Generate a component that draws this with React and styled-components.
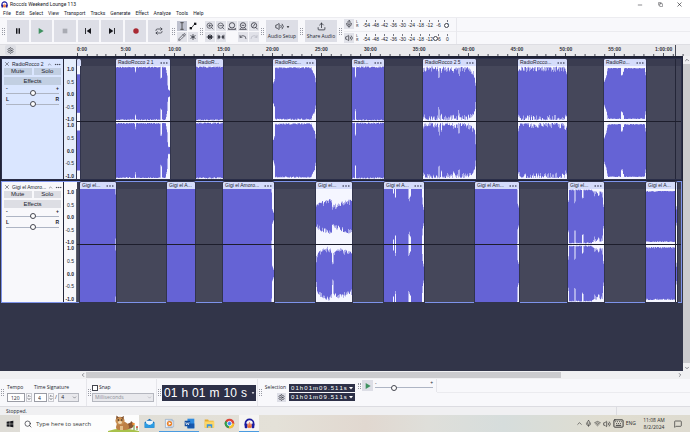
import React from "react";
import styled, { createGlobalStyle, css } from "styled-components";
import {
  Asterisk, ChevronDown, ChevronLeft, ChevronRight, ChevronUp, Ellipsis, Keyboard, MessageSquare, Mic, Minus,
  Pencil, Redo, Repeat, Search, Settings, Undo, Upload, Volume2, X, Copy, ZoomIn, ZoomOut, Wifi,
} from "lucide-react";

const Global = createGlobalStyle`
  * { box-sizing: border-box; }
  html, body { margin: 0; padding: 0; background: #f8f8fb; }
  body { font-family: "Open Sans", "Noto Sans", sans-serif; font-size: 5px; line-height: 7px; color: #22242e; }
  button, input, select { font: inherit; color: inherit; margin: 0; padding: 0; border: 0; border-radius: 0; }
  button { display: flex; align-items: center; justify-content: center; background: none; }
  svg { display: block; flex: none; }
`;

const Page = styled.div`
  display: flex;
  flex-direction: column;
  min-height: 100vh;
`;

/* ---------- title and menu ---------- */
const TitleBar = styled.header`
  display: flex;
  align-items: center;
  height: 9px;
  padding: 0 4px 0 1px;
  gap: 2px;
  background: #fff;
  color: #16171c;
`;
const Title = styled.h1`
  flex: 1;
  margin: 0;
  font-family: Roboto, sans-serif;
  font-size: 5px;
  font-weight: 400;
`;
const WindowButton = styled.button`
  width: 19px;
  height: 8px;
  &:last-child { width: 14px; }
`;
const MenuBar = styled.nav`
  display: flex;
  align-items: center;
  gap: 5px;
  height: 8px;
  padding: 0 3px 0 3px;
  background: #fff;
  font-family: Roboto, sans-serif;
  button { height: 8px; }
`;

/* ---------- toolbars ---------- */
const Toolbar = styled.div`
  display: flex;
  align-items: center;
  height: 27px;
  background: #f8f8fb;
  border-top: 1px solid #ececf0;
`;
const Grip = styled.i`
  flex: none;
  width: 3px;
  height: ${(p) => (p.$short ? 6 : 7)}px;
  margin: 0 ${(p) => (p.$wide ? 2 : 1)}px;
  border: dotted #9799a3;
  border-width: 0 1px;
`;
const Transport = styled.div`
  display: grid;
  grid-template-columns: repeat(7, 1fr);
  gap: 2px;
  width: 163px;
`;
const Key = styled.button`
  height: 22px;
  background: #dddee6;
`;
const ToolGrid = styled.div`
  display: grid;
  grid-template-columns: repeat(${(p) => p.$cols}, 10px);
  grid-auto-rows: 10px;
  gap: 1px;
`;
const Tool = styled.button`
  background: ${(p) => (p.$on ? "#bfc2cf" : p.$blank ? "none" : "#e1e2e9")};
  color: ${(p) => (p.$faint ? "#b3b5bf" : "#33353f")};
`;
const BigKey = styled.button`
  flex-direction: column;
  gap: 2px;
  width: 32px;
  height: 22px;
  background: #dddee6;
`;
const BigKeyIcon = styled.span`
  display: flex;
  align-items: center;
  gap: 2px;
`;
const Meters = styled.div`
  display: flex;
  flex-direction: column;
  width: 113px;
  height: 26px;
  border-right: 1px solid #e8e8ed;
`;
const Meter = styled.div`
  display: flex;
  align-items: center;
  flex: 1;
  & + & { border-top: 1px solid #ececf0; }
`;
const MeterButton = styled.button`
  width: 10px;
  height: 10px;
  background: #e1e2e9;
`;
const Sides = styled.span`
  width: 6px;
  padding-left: 2px;
  font-size: 4px;
  line-height: 4px;
`;
const Scale = styled.div`
  position: relative;
  display: flex;
  justify-content: space-between;
  flex: 1;
  margin: 0 4px 0 2px;
  font-size: 5px;
  line-height: 6px;
  font-family: "Liberation Sans", sans-serif;
`;
const Mark = styled.span`
  display: flex;
  flex-direction: column;
  align-items: center;
  width: 9px;
  &::before { content: ""; width: 1px; height: 2px; background: #777984; }
`;
const knob = css`
  appearance: none;
  width: ${(p) => p.$knob || 5}px;
  height: ${(p) => p.$knob || 5}px;
  border: 1px solid #44464f;
  border-radius: 50%;
  background: #fff;
`;
const Slider = styled.input`
  appearance: none;
  display: block;
  width: 100%;
  height: 6px;
  background: ${(p) => (p.$bare ? "none" : "linear-gradient(#aeb5c4, #aeb5c4) center / 100% 1px no-repeat")};
  &::-webkit-slider-thumb { ${knob} }
`;
const MeterSlider = styled(Slider)`
  position: absolute;
  inset: 2px 0 auto 0;
`;
const ToolbarRest = styled.div`
  flex: 1;
  align-self: stretch;
  background: linear-gradient(#ebebef, #ebebef) center / 100% 1px no-repeat;
`;

/* ---------- time ruler ---------- */
const TimeRuler = styled.div`
  position: relative;
  display: flex;
  height: 12px;
  background: #e9e9ec;
  border-top: 1px solid #dedee3;
  font-family: "Liberation Sans", sans-serif;
  font-weight: 700;
  line-height: 8px;
  color: #31333c;
`;
const RulerCorner = styled.div`
  width: 77px;
  padding-left: 5px;
  button { width: 11px; height: 10px; background: #dddee4; border-radius: 2px; }
`;
const RulerStart = styled.div`
  flex: 244;
  min-width: 0;
`;
const RulerCell = styled.div`
  flex: 489;
  min-width: 0;
  text-align: center;
`;
const RulerEnd = styled.div`
  flex: 20;
`;
const Ticks = styled.svg`
  width: 100%;
  height: 3px;
`;
const Playhead = styled.i`
  position: absolute;
  right: 14px;
  top: 0;
  bottom: 0;
  width: 1px;
  background: #4a4c58;
`;

/* ---------- tracks ---------- */
const Editor = styled.main`
  display: flex;
  flex: 1;
  background: #323549;
`;
const TrackList = styled.div`
  display: flex;
  flex-direction: column;
  gap: 1px;
  flex: 1;
  min-width: 0;
  padding: 2px 1px;
  background: linear-gradient(#1f2236, #1f2236) top / 100% 125px no-repeat;
`;
const TrackRow = styled.section`
  display: flex;
  border: 1px solid ${(p) => (p.$focused ? "#7d93ea" : "#2a2e48")};
  background: #23263a;
`;
const Panel = styled.div`
  display: flex;
  flex-direction: column;
  width: 61px;
  padding: 1px 2px;
  margin-right: 1px;
  background: ${(p) => (p.$selected ? "#dae6ff" : "#f8f8fb")};
  font-family: "Liberation Sans", sans-serif;
`;
const PanelTitle = styled.div`
  display: flex;
  align-items: center;
  gap: 2px;
  height: 8px;
  h2 { flex: 1; margin: 0; font-size: 5px; font-weight: 400; white-space: nowrap; }
`;
const PanelButtons = styled.div`
  display: grid;
  grid-template-columns: 1fr 1fr;
  gap: 2px;
`;
const PanelButton = styled.button`
  height: ${(p) => (p.$wide ? 8 : 7)}px;
  font-size: 6px;
  background: ${(p) => (p.$selected ? "#c2cfe2" : "#dddee4")};
  ${(p) => p.$wide && "grid-column: 1 / -1;"}
`;
const PanelSlider = styled.label`
  display: flex;
  flex-wrap: wrap;
  justify-content: space-between;
  padding: 0 2px;
  margin-top: 1px;
  font-size: 5px;
  font-weight: 700;
  line-height: 4px;
`;
const AmpRuler = styled.div`
  width: 13px;
  padding-top: 7px;
  background: ${(p) => (p.$selected ? "#e6eefc" : "#f8f8fb")};
  font-family: "Liberation Sans", sans-serif;
`;
const AmpScale = styled.div`
  display: flex;
  flex-direction: column;
  justify-content: space-between;
  align-items: flex-end;
  height: ${(p) => p.$h}px;
  padding-right: 2px;
  line-height: 6px;
  border-right: 1px solid #5b5d6a;
  span:nth-child(odd) { font-weight: 700; }
`;
const Lane = styled.div`
  position: relative;
  display: flex;
  flex: 1;
  min-width: 0;
  background: linear-gradient(#3a3c50 7px, #45475a 7px);
  &::after {
    content: "";
    position: absolute;
    inset: 62px 0 auto 0;
    height: 1px;
    background: #1d1e2c;
  }
`;
const Space = styled.div`
  flex: ${(p) => p.$span} 1 0;
  min-width: 0;
`;
const ClipBox = styled.article`
  flex: ${(p) => p.$span} 1 0;
  min-width: 0;
  box-shadow: 0 0 0 1px #31344c;
  border-radius: 2px 2px 0 0;
  background: #f5f6ff;
`;
const ClipTitle = styled.div`
  display: flex;
  align-items: center;
  justify-content: space-between;
  height: 7px;
  padding: 0 2px;
  border-radius: 2px 2px 0 0;
  overflow: hidden;
  background: #d5dcfb;
  font-family: "Liberation Sans", sans-serif;
  white-space: nowrap;
`;
const Wave = styled.svg`
  width: 100%;
  height: 113px;
`;
const Cursor = styled.i`
  position: absolute;
  right: 5px;
  top: 0;
  bottom: 0;
  width: 1px;
  background: #242638;
`;

/* ---------- scroll bars ---------- */
const VScroll = styled.div`
  display: flex;
  flex-direction: column;
  width: 7px;
  background: #f0f0f2;
  button { width: 7px; height: 7px; }
`;
const HScroll = styled.div`
  display: flex;
  align-items: center;
  height: 8px;
  padding: 0 7px 0 79px;
  background: #f0f0f2;
  button { width: 7px; height: 7px; }
`;
const Thumb = styled.i`
  flex: ${(p) => p.$size};
  align-self: stretch;
  margin: 1px 0;
  background: #cbcbce;
`;

/* ---------- bottom bar ---------- */
const BottomBar = styled.div`
  display: flex;
  align-items: center;
  height: 27px;
  background: #f8f8fb;
`;
const Fields = styled.div`
  display: grid;
  grid-template-rows: 10px 10px;
  align-items: center;
  width: ${(p) => p.$w}px;
  margin-left: ${(p) => p.$ml || 0}px;
`;
const Line = styled.div`
  display: flex;
  align-items: center;
`;
const NumberBox = styled.input`
  width: ${(p) => p.$w}px;
  height: 9px;
  padding-left: 3px;
  border: 1px solid #9a9ca5;
  background: #fff;
`;
const Spinner = styled.span`
  display: flex;
  flex-direction: column;
  width: 6px;
  height: 9px;
  margin: 0 1px;
  border: 1px solid #c9cad0;
  button { height: 3px; }
`;
const SelectWrap = styled.span`
  display: flex;
  align-items: center;
  width: ${(p) => p.$w}px;
  height: 9px;
  padding-right: 1px;
  border: 1px solid #b5b7bf;
  background: #e9e9ed;
  color: ${(p) => (p.$off ? "#8c8e97" : "#22242e")};
  select { appearance: none; flex: 1; min-width: 0; height: 7px; line-height: 7px; padding-left: 2px; background: none; opacity: 1; }
`;
const SnapLabel = styled.label`
  display: flex;
  align-items: center;
  gap: 1px;
  input { appearance: none; width: 6px; height: 6px; border: 1px solid #44464f; background: #fff; }
`;
const BigTime = styled.output`
  display: flex;
  align-items: center;
  justify-content: space-between;
  width: 94px;
  height: 16px;
  padding: 0 1px 0 2px;
  background: #2d3047;
  color: #fff;
  font: 12px/16px "Liberation Sans", sans-serif;
`;
const SmallTime = styled.output`
  display: flex;
  align-items: center;
  justify-content: space-between;
  width: 66px;
  height: 8px;
  padding: 0 1px 0 2px;
  background: #2d3047;
  color: #fff;
  font: 6px/8px "Liberation Sans", sans-serif;
`;
const SelectionGrid = styled.div`
  display: grid;
  grid-template-columns: 21px 66px;
  gap: 1px 3px;
  align-items: center;
  justify-items: end;
  margin: 0 2px;
`;
const SmallKey = styled.button`
  width: ${(p) => p.$w}px;
  height: ${(p) => p.$h}px;
  background: #dddee6;
`;
const Speed = styled.div`
  display: flex;
  align-items: center;
  align-self: flex-start;
  height: 13px;
  padding-right: 3px;
  border-right: 1px solid #e6e6eb;
`;
const SpeedLabel = styled.label`
  display: flex;
  flex-wrap: wrap;
  justify-content: space-between;
  width: 58px;
  margin-left: 2px;
  line-height: 4px;
`;
const Rule = styled.i`
  align-self: stretch;
  width: 1px;
  margin: 0 0 0 1px;
  background: #e6e6eb;
`;
const Status = styled.footer`
  display: flex;
  align-items: center;
  height: 9px;
  padding-left: 6px;
  border-top: 1px solid #dcdce1;
  background: #f0f0f2;
  span:first-child { flex: 1; }
  span:last-child { width: 74px; height: 8px; border-left: 1px solid #dcdce1; }
`;

/* ---------- Windows task bar ---------- */
const TaskBar = styled.div`
  display: flex;
  align-items: center;
  height: 17px;
  background: linear-gradient(90deg, #dedcd6 0%, #e4e1d8 40%, #e1d8d0 53%, #dfdfda 62%, #d6dddc 73%, #e0ddd0 88%, #dedbd0 100%);
`;
const StartButton = styled.button`
  width: 20px;
  height: 17px;
`;
const SearchBox = styled.label`
  display: flex;
  align-items: center;
  gap: 4px;
  width: 119px;
  height: 17px;
  padding-left: 4px;
  background: #fdfdfd;
  input { flex: 1; min-width: 0; background: none; font-size: 6px; line-height: 12px; }
  input::placeholder { color: #3a3a3a; opacity: 1; }
`;
const TaskButton = styled.button`
  width: 20px;
  height: 17px;
  background: ${(p) => (p.$active ? "#f6f5f3" : "none")};
  border-bottom: 1px solid ${(p) => (p.$open ? "#4a9be0" : "transparent")};
`;
const Tray = styled.div`
  display: flex;
  align-items: center;
  gap: 2px;
  margin-left: auto;
  padding-right: 8px;
  color: #2c2c2c;
`;
const Clock = styled.time`
  width: 26px;
  margin: 0 5px 0 3px;
  font-size: 5px;
  line-height: 7px;
  text-align: center;
  white-space: nowrap;
`;

/* ---------- wave forms ---------- */
const level = (points, f) => {
  for (let i = 1; i < points.length; i++) {
    const [a, va] = points[i - 1];
    const [b, vb] = points[i];
    if (f <= b) return va + ((vb - va) * (f - a)) / (b - a || 1);
  }
  return points[points.length - 1][1];
};

const wavePath = (width, shape, top, height, seed, side) => {
  const n = width * 2;
  let s = seed * 7919 + 13;
  const random = () => {
    s = (s * 1103515245 + 12345) % 2147483648;
    return s / 2147483648;
  };
  const mid = top + height / 2;
  let up = "";
  let down = "";
  for (let i = 0; i < n; i++) {
    const f = (i + 0.5) / n;
    const x = i / 2;
    let base = level(shape[side] || shape.points, f);
    for (const [at, amp, half] of shape.dips || []) if (Math.abs(f - at) <= (half || 0.012)) base = Math.min(base, amp + random() * 0.12);
    const y = (k) => Math.max(0.02, base - (shape.noise || 0) * k * k) * (height / 2);
    const a = y(random());
    const b = y(random());
    up += `L${x} ${(mid - a).toFixed(1)}H${x + 0.5}`;
    down = `L${x + 0.5} ${(mid + b).toFixed(1)}H${x}` + down;
  }
  return `M0 ${mid}${up}${down}Z`;
};

const flat = (v) => [[0, v], [1, v]];
const trackOne = [
  { x: 77, end: 80, shape: { points: flat(0.7) } },
  { x: 116, end: 170, name: "RadioRocco 2 1", dots: true, shape: { points: [[0, 0.97], [0.92, 0.97], [0.94, 0.75], [0.955, 0.6], [0.96, 0.15], [1, 0.12]], noise: 0.04, dips: [[0.36, 0.75], [0.84, 0.5]] } },
  { x: 196, end: 223, name: "RadioR...", shape: { points: flat(0.98), noise: 0.05 } },
  { x: 273, end: 316, name: "RadioRoc...", dots: true, shape: { points: [[0, 0.35], [0.04, 0.5], [0.05, 0.95], [0.89, 0.96], [0.92, 0.82], [0.97, 0.7], [1, 0.4]], noise: 0.05 } },
  { x: 352, end: 384, name: "Radi...", dots: true, shape: { points: [[0, 0.98], [1, 0.98]], noise: 0.05, dips: [[0.11, 0.55]] } },
  { x: 423, end: 476, name: "RadioRocco 2 5", dots: true, shape: { points: [[0, 0.92], [0.1, 0.98], [0.84, 0.96], [0.95, 0.82], [0.98, 0.7], [1, 0.25]], noise: 0.18, dips: [[0.3, 0.55], [0.35, 0.75], [0.58, 0.8], [0.68, 0.65]] } },
  { x: 518, end: 567, name: "RadioRocco...", dots: true, shape: { points: [[0, 0.84], [0.06, 0.97], [0.94, 0.97], [1, 0.8]], noise: 0.19 } },
  { x: 604, end: 646, name: "RadioRo...", dots: true, shape: { points: [[0, 0.4], [0.06, 0.65], [0.09, 0.93], [0.97, 0.93], [1, 0.6]], noise: 0.03, dips: [[0.43, 0.65, 0.02], [0.46, 0.8, 0.02]] } },
];
const trackTwo = [
  { x: 80, end: 116, name: "Gigi el...", dots: true, shape: { points: [[0, 1], [0.98, 1], [1, 0.7]] } },
  { x: 167, end: 195, name: "Gigi el A...", shape: { points: flat(1) } },
  { x: 223, end: 274, name: "Gigi el Amoro...", dots: true, shape: { points: [[0, 1], [0.955, 1], [0.96, 0.3], [1, 0.1]] } },
  {
    x: 316, end: 352, name: "Gigi el...", dots: true,
    shape: {
      points: flat(0.6), noise: 0.2, dips: [[0.02, 0.3], [0.46, 0.3, 0.02]],
      upper: [[0, 0.45], [0.15, 0.55], [0.4, 0.65], [0.5, 0.45], [0.9, 0.62], [1, 0.6]],
      lower: [[0, 0.6], [0.1, 0.8], [0.35, 0.97], [0.5, 0.75], [0.65, 0.9], [0.9, 0.8], [1, 0.75]],
    },
  },
  { x: 384, end: 424, name: "Gigi el A...", dots: true, shape: { points: [[0, 1], [0.95, 1], [0.96, 0.5], [1, 0.2]], dips: [[0.24, 0.72], [0.29, 0.6], [0.62, 0.55], [0.66, 0.68, 0.02]] } },
  { x: 475, end: 519, name: "Gigi el Am...", dots: true, shape: { points: [[0, 1], [0.96, 1], [0.965, 0.5], [1, 0.3]] } },
  { x: 568, end: 604, name: "Gigi el...", dots: true, shape: { points: [[0, 0.98], [0.66, 0.98], [0.68, 0.93], [0.96, 0.9], [0.97, 0.5], [1, 0.3]], noise: 0.04, dips: [[0.015, 0.5], [0.2, 0.5, 0.015], [0.41, 0.62, 0.02], [0.7, 0.85], [0.75, 0.72, 0.02], [0.81, 0.8, 0.02], [0.86, 0.72, 0.02], [0.92, 0.82, 0.02]] } },
  { x: 646, end: 677, name: "Gigi el A...", shape: { points: [[0, 0.93], [0.94, 0.93], [0.96, 0.5], [1, 0.2]], noise: 0.05 } },
];

function Dots() {
  return (
    <svg width="8" height="2" viewBox="0 0 8 2" fill="#30334a">
      <circle cx="1.2" cy="1" r=".8" /><circle cx="4" cy="1" r=".8" /><circle cx="6.8" cy="1" r=".8" />
    </svg>
  );
}

function Clip({ clip, seed }) {
  const w = clip.end - clip.x;
  return (
    <ClipBox $span={w}>
      <ClipTitle>
        <span>{clip.name}</span>
        {clip.dots && <Dots />}
      </ClipTitle>
      <Wave viewBox={`0 0 ${w} 113`} preserveAspectRatio="none" fill="#6563d5">
        <path d={wavePath(w, clip.shape, 0, 55, seed, "upper")} />
        <path d={wavePath(w, clip.shape, 56, 57, seed + 40, "lower")} />
      </Wave>
    </ClipBox>
  );
}

function Track({ name, clips, selected, focused, seed }) {
  const parts = [];
  let at = 77;
  clips.forEach((clip, i) => {
    if (clip.x > at) parts.push(<Space key={`s${i}`} $span={clip.x - at} />);
    parts.push(<Clip key={i} clip={clip} seed={seed + i} />);
    at = clip.end;
  });
  return (
    <TrackRow $focused={focused}>
      <Panel $selected={selected}>
        <PanelTitle>
          <button aria-label="Close track"><X size={6} /></button>
          <h2>{name}</h2>
          <button aria-label="Collapse track"><ChevronUp size={5} /></button>
          <button aria-label="Track menu"><Ellipsis size={7} /></button>
        </PanelTitle>
        <PanelButtons>
          <PanelButton $selected={selected}>Mute</PanelButton>
          <PanelButton $selected={selected}>Solo</PanelButton>
          <PanelButton $selected={selected} $wide>Effects</PanelButton>
        </PanelButtons>
        <PanelSlider>
          <span>-</span><span>+</span>
          <Slider type="range" aria-label="Volume" defaultValue="50" $knob={6} />
        </PanelSlider>
        <PanelSlider>
          <span>L</span><span>R</span>
          <Slider type="range" aria-label="Pan" defaultValue="50" $knob={6} />
        </PanelSlider>
      </Panel>
      <AmpRuler $selected={selected}>
        {[56, 57].map((h) => (
          <AmpScale key={h} $h={h}>
            {["1.0", "0.5", "0.0", "-0.5", "-1.0"].map((v) => <span key={v}>{v}</span>)}
          </AmpScale>
        ))}
      </AmpRuler>
      <Lane>
        {parts}
        <Space $span={681 - at} />
        <Cursor />
      </Lane>
    </TrackRow>
  );
}

/* ---------- icons ---------- */
const Headphones = ({ size }) => (
  <svg width={size} height={size} viewBox="0 0 16 16">
    <path d="M2 11V8a6 6 0 0 1 12 0v3" fill="none" stroke="#1b1ba0" strokeWidth="2.4" />
    <rect x="1" y="8" width="4" height="7" rx="1.5" fill="#1b1ba0" />
    <rect x="11" y="8" width="4" height="7" rx="1.5" fill="#1b1ba0" />
    <path d="M5 11l1-3 1 5 1-7 1 7 1-5 1 3-1 3H6z" fill="#f08a1c" stroke="#e4482e" strokeWidth=".6" />
  </svg>
);
const glyph = {
  pause: <path d="M3 2h2.2v8H3zM6.8 2H9v8H6.8z" />,
  play: <path d="M2.5 1.5v9l7.5-4.5z" fill="#3f9160" />,
  stop: <path d="M2.5 2.5h7v7h-7z" fill="#a9abb3" />,
  start: <path d="M1.6 1.5h1.3v9H1.6zM10.5 1.5v9L4 6z" />,
  end: <path d="M9.1 1.5h1.3v9H9.1zM1.5 1.5v9L8 6z" />,
  record: <circle cx="6" cy="6" r="4.1" fill="#a92a33" />,
  select: <path d="M3.5 1H8.5M3.5 11H8.5M6 1V11" stroke="#333" strokeWidth="1.2" />,
  envelope: <g><path d="M2 9.5C6 9 6 3 10 2.5" fill="none" stroke="#222" strokeWidth="1.2" /><rect x="1" y="7.5" width="3.5" height="3.5" /><rect x="7.5" y="1" width="3.5" height="3.5" /></g>,
  trim: <path d="M1 5.4h2V3h1.5v1h.8V2h1.4v2h.8V3H9v2.4h2v1.2H9V9H7.500V8h-.8v2H5.300V8h-.8v1H3V6.600H1z" />,
  silence: <path d="M1 2.500h1.300V5h1.200V3.500h1v2h3v-2h1V5h1.200V2.500H11v7H9.700V7H8.500v1.500h-1v-2h-3v2h-1V7H2.300v2.500H1z" />,
  down: <path d="M2 4h8L6 9z" />,
  win: <path d="M1 2.500l4.500-.7v3.900H1zM6.200 1.700L11 1v4.700H6.200zM1 6.400h4.500v3.900L1 9.600zM6.200 6.400H11V11l-4.800-.7z" />,
};
const Glyph = ({ name, size = 8, color = "#16171c" }) => (
  <svg width={size} height={size} viewBox="0 0 12 12" fill={color}>{glyph[name]}</svg>
);
const ZoomBase = ({ children }) => (
  <svg width="8" height="8" viewBox="0 0 24 24" fill="none" stroke="currentColor" strokeWidth="2.4">
    <circle cx="12" cy="10" r="8" />{children}
  </svg>
);
const Squirrel = () => (
  <svg width="31" height="17" viewBox="0 0 31 17">
    <path d="M0 16Q13 11 31 16v1H0z" fill="#a8c14b" />
    <path d="M18 14c8 1 10-5 5-8 0 3-5 2-6 5z" fill="#8b5530" />
    <path d="M9 8c4-3 12-1 12 4 0 3-3 3-7 3s-6 0-6-3z" fill="#bd8045" />
    <ellipse cx="12" cy="5.800" rx="4.600" ry="4" fill="#c98f52" />
    <path d="M8 4L8.500.500 11 2.500zM13 2.500L16 1l-.6 3.500z" fill="#80502d" />
    <ellipse cx="12" cy="7.500" rx="2" ry="1.400" fill="#f0d9b3" />
    <circle cx="10.300" cy="5" r=".7" fill="#222" /><circle cx="13.800" cy="5" r=".7" fill="#222" />
    <path d="M12 11h3v4h-3z" fill="#e2bd88" />
    <path d="M26 15v-5M29 15v-3" stroke="#5a8d36" />
    <circle cx="25.500" cy="9" r="1.300" fill="#ef8f35" /><circle cx="29" cy="12" r="1" fill="#d84b3a" />
  </svg>
);
const taskIcons = [
  { label: "Mail", art: <><path d="M1 6l7-5 7 5v8H1z" fill="#1267b3" /><path d="M3 4h10v6H3z" fill="#eaf5fd" /><path d="M1 6l7 5 7-5v8H1z" fill="#2b9be2" /></> },
  { label: "Media player", open: true, art: <><path d="M2 2h10v12H2z" fill="#eef1f5" stroke="#89a4c6" /><path d="M6 4h8v9H6z" fill="#d7dde8" stroke="#8ba0bd" strokeWidth=".7" /><circle cx="8" cy="8" r="3.800" fill="#ec8226" /><path d="M6.800 5.800v4.400L10.500 8z" fill="#fff" /></> },
  { label: "Word", open: true, art: <><path d="M5 1h10v14H5z" fill="#2f8be0" /><path d="M5 8h10v7H5z" fill="#1858ac" /><path d="M1 4h8v8H1z" fill="#124da0" /><path d="M2.500 6l1 4L5 7l1.500 3 1-4" fill="none" stroke="#fff" /></> },
  { label: "File Explorer", art: <><path d="M1 2h5l1 2h7v10H1z" fill="#e7aa2b" /><path d="M1 5h14v9H1z" fill="#fcd667" /><path d="M4 9h8v5h-2v-2H6v2H4z" fill="#3d94da" /></> },
  { label: "Chrome", art: <><circle cx="8" cy="8" r="7" fill="#dc4437" /><path d="M8 8L2 4.400A7 7 0 0 0 7 15z" fill="#2fa251" /><path d="M8 8h7A7 7 0 0 1 7 15z" fill="#f5c52f" /><circle cx="8" cy="8" r="3.200" fill="#4285f4" stroke="#fff" strokeWidth="1.200" /></> },
];

const menus = ["File", "Edit", "Select", "View", "Transport", "Tracks", "Generate", "Effect", "Analyze", "Tools", "Help"];
const marks = ["-54", "-48", "-42", "-36", "-30", "-24", "-18", "-12", "-6", "0"];
const times = ["5:00", "10:00", "15:00", "20:00", "25:00", "30:00", "35:00", "40:00", "45:00", "50:00", "55:00", "1:00:00"];

const MeterRow = ({ label, icon, value }) => (
  <Meter>
    <MeterButton aria-label={label}>{icon}</MeterButton>
    <Sides>L<br />R</Sides>
    <Scale>
      {marks.map((m) => <Mark key={m}>{m}</Mark>)}
      <MeterSlider type="range" aria-label={`${label} level`} defaultValue={value} $bare />
    </Scale>
  </Meter>
);
const Spin = () => (
  <Spinner>
    <button aria-label="Increase"><ChevronUp size={4} strokeWidth={4} /></button>
    <button aria-label="Decrease"><ChevronDown size={4} strokeWidth={4} /></button>
  </Spinner>
);
const SelectionTime = () => (
  <SmallTime>
    {[..."01h01m09.511s"].map((c, i) => <span key={i}>{c}</span>)}
    <Glyph name="down" size={6} color="#fff" />
  </SmallTime>
);

export default function App() {
  return (
    <Page>
      <Global />
      <TitleBar>
        <Headphones size={7} />
        <Title>Rocco's Weekend Lounge 113</Title>
        <WindowButton aria-label="Minimize"><Minus size={6} /></WindowButton>
        <WindowButton aria-label="Restore"><Copy size={5} /></WindowButton>
        <WindowButton aria-label="Close"><X size={7} /></WindowButton>
      </TitleBar>
      <MenuBar>{menus.map((m) => <button key={m}>{m}</button>)}</MenuBar>

      <Toolbar>
        <Grip $wide />
        <Transport>
          {["pause", "play", "stop", "start", "end", "record"].map((n) => (
            <Key key={n} aria-label={n}><Glyph name={n} size={8} /></Key>
          ))}
          <Key aria-label="Loop"><Repeat size={8} /></Key>
        </Transport>
        <Grip $wide />
        <ToolGrid $cols={2}>
          <Tool $on aria-label="Selection tool"><Glyph name="select" /></Tool>
          <Tool $blank aria-label="Envelope tool"><Glyph name="envelope" /></Tool>
          <Tool aria-label="Draw tool"><Pencil size={8} /></Tool>
          <Tool aria-label="Multi-tool"><Asterisk size={10} /></Tool>
        </ToolGrid>
        <Grip $wide />
        <ToolGrid $cols={5}>
          <Tool aria-label="Zoom in"><ZoomIn size={8} /></Tool>
          <Tool aria-label="Zoom out"><ZoomOut size={8} /></Tool>
          <Tool aria-label="Fit selection"><ZoomBase><path d="M2 22h20M2 18v5M22 18v5" /></ZoomBase></Tool>
          <Tool aria-label="Fit project"><ZoomBase><path d="M2 22h20M5 19l-3 3M19 19l3 3M8 10h8" /></ZoomBase></Tool>
          <Tool aria-label="Zoom toggle"><ZoomBase><path d="M17 16l6 6M9 14l6-8" /></ZoomBase></Tool>
          <Tool aria-label="Trim"><Glyph name="trim" color="#33353f" /></Tool>
          <Tool aria-label="Silence"><Glyph name="silence" color="#33353f" /></Tool>
          <span />
          <Tool aria-label="Undo"><Undo size={8} /></Tool>
          <Tool $faint aria-label="Redo"><Redo size={8} /></Tool>
        </ToolGrid>
        <Grip $wide />
        <BigKey>
          <BigKeyIcon><Volume2 size={9} /><Glyph name="down" size={4} /></BigKeyIcon>
          Audio Setup
        </BigKey>
        <Grip $wide />
        <BigKey><Upload size={9} />Share Audio</BigKey>
        <Grip $wide />
        <Meters>
          <MeterRow label="Record meter" icon={<Mic size={8} />} value="97" />
          <MeterRow label="Playback meter" icon={<Volume2 size={8} />} value="84" />
        </Meters>
        <ToolbarRest />
      </Toolbar>

      <TimeRuler>
        <RulerCorner><button aria-label="Timeline options"><Settings size={7} /></button></RulerCorner>
        <RulerStart>
          0:00
          <Ticks viewBox="0 0 244 3" preserveAspectRatio="none" fill="#4b4d58">
            <path d="M0 0h10v3H0zM98 1h10v2H98zM196 1h10v2h-10z" />
          </Ticks>
        </RulerStart>
        {times.map((t) => (
          <RulerCell key={t}>
            {t}
            <Ticks viewBox="0 0 489 3" preserveAspectRatio="none" fill="#4b4d58">
              <path d="M44 1h10v2H44zM142 1h10v2h-10zM240 0h10v3h-10zM338 1h10v2h-10zM436 1h10v2h-10z" />
            </Ticks>
          </RulerCell>
        ))}
        <RulerEnd />
        <Playhead />
      </TimeRuler>

      <Editor>
        <TrackList>
          <Track name="RadioRocco 2" clips={trackOne} selected seed={3} />
          <Track name="Gigi el Amoro..." clips={trackTwo} focused seed={20} />
        </TrackList>
        <VScroll>
          <button aria-label="Scroll up"><ChevronUp size={6} /></button>
          <Thumb $size={1} />
          <button aria-label="Scroll down"><ChevronDown size={6} /></button>
        </VScroll>
      </Editor>
      <HScroll>
        <button aria-label="Scroll left"><ChevronLeft size={6} /></button>
        <Thumb $size={475} />
        <Space $span={115} />
        <button aria-label="Scroll right"><ChevronRight size={6} /></button>
      </HScroll>

      <BottomBar>
        <Grip />
        <Fields $w={27} $ml={2}>
          <label htmlFor="tempo">Tempo</label>
          <Line><NumberBox id="tempo" $w={18} defaultValue="120" /><Spin /></Line>
        </Fields>
        <Fields $w={51}>
          <label htmlFor="beats">Time Signature</label>
          <Line>
            <NumberBox id="beats" $w={13} defaultValue="4" /><Spin />/&nbsp;
            <SelectWrap $w={21}>
              <select aria-label="Beat unit" defaultValue="4"><option>4</option></select>
              <ChevronDown size={5} />
            </SelectWrap>
          </Line>
        </Fields>
        <Rule />
        <Grip />
        <Fields $w={63}>
          <SnapLabel><input type="checkbox" />Snap</SnapLabel>
          <SelectWrap $w={62} $off>
            <select aria-label="Snap to" disabled><option>Milliseconds</option></select>
            <ChevronDown size={5} />
          </SelectWrap>
        </Fields>
        <Rule />
        <Grip />
        <BigTime>
          {["01", "h", "01", "m", "10", "s"].map((c, i) => <span key={i}>{c}</span>)}
          <Glyph name="down" size={4} color="#fff" />
        </BigTime>
        <Rule />
        <Grip />
        <SelectionGrid>
          <span>Selection</span><SelectionTime />
          <SmallKey $w={9} $h={9} aria-label="Selection options"><Settings size={7} /></SmallKey><SelectionTime />
        </SelectionGrid>
        <Speed>
          <Grip $short />
          <SmallKey $w={11} $h={11} aria-label="Play at speed"><Glyph name="play" size={8} /></SmallKey>
          <SpeedLabel>
            <span>-</span><span>+</span>
            <Slider type="range" aria-label="Playback speed" defaultValue="31" $knob={6} />
          </SpeedLabel>
        </Speed>
        <ToolbarRest />
      </BottomBar>
      <Status><span>Stopped.</span><span /></Status>

      <TaskBar>
        <StartButton aria-label="Start"><Glyph name="win" size={8} /></StartButton>
        <SearchBox>
          <Search size={8} />
          <input type="text" aria-label="Search" placeholder="Type here to search" />
          <Squirrel />
        </SearchBox>
        {taskIcons.map((t) => (
          <TaskButton key={t.label} aria-label={t.label} $open={t.open}>
            <svg width="11" height="11" viewBox="0 0 16 16">{t.art}</svg>
          </TaskButton>
        ))}
        <TaskButton aria-label="Audacity" $open $active><Headphones size={11} /></TaskButton>
        <Tray>
          <ChevronUp size={7} /><Mic size={7} /><Wifi size={7} /><Volume2 size={8} /><Keyboard size={11} />
          <span>ENG</span>
          <Clock>11:08 AM<br />8/2/2024</Clock>
          <MessageSquare size={8} />
        </Tray>
      </TaskBar>
    </Page>
  );
}
